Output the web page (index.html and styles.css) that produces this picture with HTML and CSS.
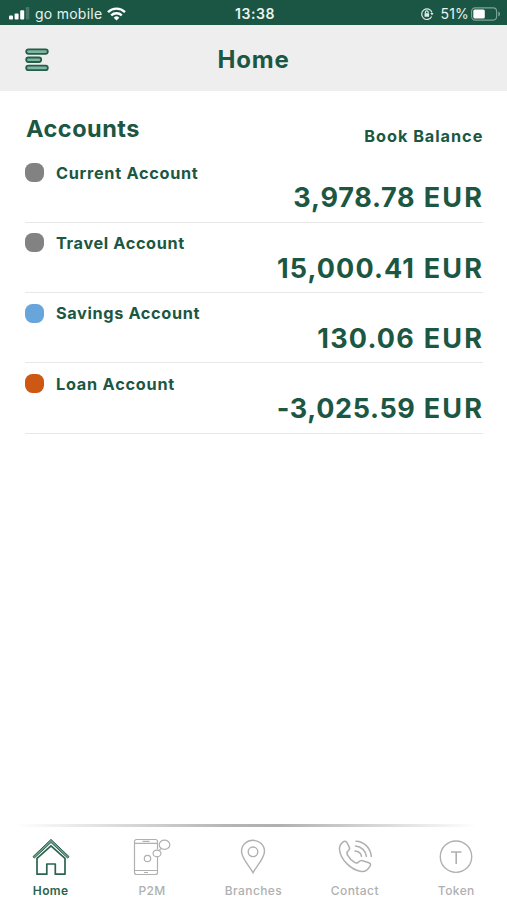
FILE: index.html
```html
<!DOCTYPE html>
<html lang="en">
<head>
<meta charset="utf-8">
<meta name="viewport" content="width=device-width, initial-scale=1">
<title>Home</title>
<link rel="stylesheet" href="styles.css">
</head>
<body>
<div class="app">
  <div class="status">
    <div class="status-left">
      <svg class="signal" width="22" height="13" viewBox="0 0 22 13" fill="#fff"><rect x="0" y="8.5" width="4" height="4" rx="1"/><rect x="5.6" y="6.5" width="4" height="6" rx="1"/><rect x="11.2" y="3.3" width="4" height="9.2" rx="1"/><rect x="16.8" y="0" width="3.5" height="12.5" rx="1" opacity=".2"/></svg>
      <span class="carrier">go mobile</span>
      <svg class="wifi" width="19" height="14" viewBox="0 0 19 14" fill="none" stroke="#fff" stroke-width="2.4"><path d="M1 5.1a12.2 12.2 0 0 1 17 0"/><path d="M4.2 8.4a7.6 7.6 0 0 1 10.600 0"/><path d="M9.500 13.400 6.700 10.700a4 4 0 0 1 5.600 0z" fill="#fff" stroke="none"/></svg>
    </div>
    <span class="clock">13:38</span>
    <div class="status-right">
      <svg width="14" height="14" viewBox="0 0 14 14" fill="none" stroke="#dcebe5" stroke-width="1.200"><path d="M11.700 9.600A5.300 5.300 0 1 1 12 5.500"/><path d="M10.300 6h3.200l-1.500 2.500z" fill="#dcebe5" stroke="none"/><rect x="4.500" y="6.300" width="4.600" height="3.500" rx=".5" fill="#dcebe5" stroke="none"/><path d="M5.400 6.500V5.200a1.400 1.400 0 0 1 2.800 0v1.300"/></svg>
      <span class="percent">51%</span>
      <svg width="30" height="14" viewBox="0 0 30 14"><rect x=".6" y=".9" width="25" height="12.200" rx="3.500" fill="none" stroke="#7da497" stroke-width="1.100"/><rect x="2.300" y="2.600" width="11.500" height="8.800" rx="1.500" fill="#fff"/><path d="M27.300 4.500c2.300.8 2.300 4.200 0 5z" fill="#7da497"/></svg>
    </div>
  </div>
  <header class="header">
    <svg class="menu" width="24" height="24" viewBox="0 0 24 24" fill="#80b5a2" stroke="#245d49" stroke-width="1.800"><rect x="1.200" y="1.300" width="21.600" height="4.500" rx="2.200"/><rect x="1.200" y="9.500" width="15" height="4.500" rx="2.200"/><rect x="1.200" y="17.700" width="21.600" height="4.500" rx="2.200"/></svg>
    <h1 class="title">Home</h1>
  </header>
  <main class="main">
    <div class="heading">
      <h2 class="section-title">Accounts</h2>
      <span class="balance-label">Book Balance</span>
    </div>
    <ul class="accounts">
      <li class="account"><i class="dot"></i><span class="name current">Current Account</span><span class="amount a1">3,978.78 <span class="currency">EUR</span></span></li>
      <li class="account"><i class="dot"></i><span class="name travel">Travel Account</span><span class="amount a2">15,000.41 <span class="currency">EUR</span></span></li>
      <li class="account"><i class="dot blue"></i><span class="name savings">Savings Account</span><span class="amount a3">130.06 <span class="currency">EUR</span></span></li>
      <li class="account"><i class="dot orange"></i><span class="name loan">Loan Account</span><span class="amount a4">-3,025.59 <span class="currency">EUR</span></span></li>
    </ul>
  </main>
  <nav class="tabs">
    <div class="tab active">
      <svg width="40" height="40" viewBox="0 0 40 40" fill="none" stroke="currentColor" stroke-width="1.700" stroke-linejoin="round"><path d="M2 19.600 20 2.400l18 17.200-1.300 1.500L20 5.500 3.300 21.100z" fill="#6d9c89" stroke-width="1"/><path d="M6 21.300V37.200h9.800V27h8.500v10.200H34V21.300L20 8.800z"/></svg>
      <span>Home</span>
    </div>
    <div class="tab p2m">
      <svg width="40" height="40" viewBox="0 0 40 40" fill="none" stroke="currentColor" stroke-width="1.200"><path d="M25.500 12.500V4.500a2 2 0 0 0-2-2h-19a2 2 0 0 0-2 2v31a2 2 0 0 0 2 2h19a2 2 0 0 0 2-2V20M2.500 6.300h22.800M2.500 33.500h23M10.500 4.300h7M12 35.500h4"/><ellipse cx="32.500" cy="7.800" rx="5.300" ry="4.600"/><ellipse cx="25" cy="16.400" rx="3.900" ry="3.300"/><circle cx="15.500" cy="21.500" r="3.200"/><path d="m27.300 13.300 1.700-1.800"/></svg>
      <span>P2M</span>
    </div>
    <div class="tab">
      <svg width="40" height="40" viewBox="0 0 40 40" fill="none" stroke="currentColor" stroke-width="1.400"><path d="M20 35.800C17.200 30 8.500 21.600 8.500 14.300a11.500 11 0 0 1 23 0C31.500 21.600 22.800 30 20 35.800z"/><circle cx="20" cy="14.800" r="4.800"/></svg>
      <span>Branches</span>
    </div>
    <div class="tab">
      <svg width="40" height="40" viewBox="0 0 40 40" fill="none" stroke="currentColor" stroke-width="1.500" stroke-linejoin="round" stroke-linecap="round"><path d="M7.800 5.200c1.400-1.300 3.200-1.200 4.100.3l2.400 4.600c.8 1.500.3 2.500-1.100 3.700-1.500 1.200-1.800 2.200-.8 4.100 1.700 3.200 4.400 6 7.600 7.700 1.900 1 2.700.6 3.900-.8 1.200-1.500 2.300-1.600 3.700-1.100l6.200 2.100c2 .7 2.200 1.700 1.100 3.500-2 3.400-5.200 5.700-8.700 5.200C16 33 5.300 22.500 4.500 12.200c-.2-3 1.200-5.300 3.300-7z"/><path d="M21 4.200c8 .2 14.500 6.600 15.300 15.200M20.500 9.100c5.900.5 10.300 4.800 10.900 10.300M20 14c3.500.3 6 2.400 6.500 5.400"/></svg>
      <span>Contact</span>
    </div>
    <div class="tab">
      <svg width="40" height="40" viewBox="0 0 40 40" fill="none" stroke="currentColor" stroke-width="1.400"><circle cx="20" cy="19.700" r="15.700"/><path d="M15 15h10.400M20.200 15v12" stroke-width="1.600"/></svg>
      <span>Token</span>
    </div>
  </nav>
</div>
</body>
</html>
```

FILE: styles.css
```css
* { box-sizing: border-box; }
body { margin: 0; background: #fff; color: #1c5743; font-family: Inter, "Liberation Sans", sans-serif; }
h1, h2, ul { margin: 0; padding: 0; }
svg { display: block; flex: none; }
.app { height: 900px; display: flex; flex-direction: column; }

.status { height: 25px; background: #1a5643; color: #e9f3ef; display: grid; grid-template-columns: 1fr auto 1fr; align-items: center; padding: 2px 6px 0 9px; font-size: 14px; line-height: 20px; }
.status-left, .status-right { display: flex; align-items: center; }
.status-right { justify-content: flex-end; }
.carrier { margin: 0 5px 0 4px; letter-spacing: .25px; }
.clock { font-weight: 600; letter-spacing: .6px; }
.percent { margin: 0 2px 0 6px; letter-spacing: .2px; }

.header { height: 66px; background: #eee; display: grid; grid-template-columns: 1fr auto 1fr; align-items: center; padding: 4px 25px 0; }
.title { font-size: 24px; line-height: 30px; font-weight: 700; letter-spacing: .8px; }

.main { flex: 1; padding: 23px 24px 0 25px; }
.heading { display: flex; justify-content: space-between; height: 38.2px; padding-right: 0; }
.section-title { font-size: 23.5px; line-height: 30px; font-weight: 700; letter-spacing: .5px; margin-left: 1px; }
.balance-label { font-size: 16.3px; line-height: 20px; font-weight: 650; letter-spacing: .95px; margin-top: 12px; margin-right: -.3px; }
.accounts { list-style: none; }
.account { height: 70.4px; border-bottom: 1px solid #e8e8e8; display: grid; grid-template-columns: 19px 1fr; column-gap: 12px; grid-template-rows: 30px 36px; }
.dot { width: 19px; height: 19px; border-radius: 7.5px; background: #828282; margin-top: 10.8px; }
.blue { background: #68a5db; }
.orange { background: #cd5814; }
.name { font-size: 16.3px; line-height: 20px; font-weight: 650; margin-top: 10.5px; }
.current { letter-spacing: .7px; }
.travel { letter-spacing: .62px; }
.savings { letter-spacing: .63px; }
.loan { letter-spacing: .76px; }
.amount { grid-column: 1 / -1; justify-self: end; font-size: 27px; line-height: 32px; font-weight: 700; margin-right: -1px; word-spacing: 1.2px; }
.currency { letter-spacing: 2.1px; }
.a1 { letter-spacing: .75px; }
.a2 { letter-spacing: 1.1px; }
.a3 { letter-spacing: 1.2px; }
.a4 { letter-spacing: .65px; }

.tabs { height: 76px; display: grid; grid-template-columns: repeat(5, 1fr); padding-top: 13px; position: relative; }
.tabs::before { content: ""; position: absolute; left: 0; right: 0; top: 0; height: 3px; background: linear-gradient(90deg, transparent 3%, #b5b5b5 45%, #b0b0b0 55%, transparent 94%); }
.tab { display: flex; flex-direction: column; align-items: center; color: #b0b0b0; font-size: 12px; line-height: 16px; font-weight: 500; letter-spacing: .4px; }
.tab span { margin-top: 6px; }
.active { color: #2a644f; font-weight: 600; }
```
